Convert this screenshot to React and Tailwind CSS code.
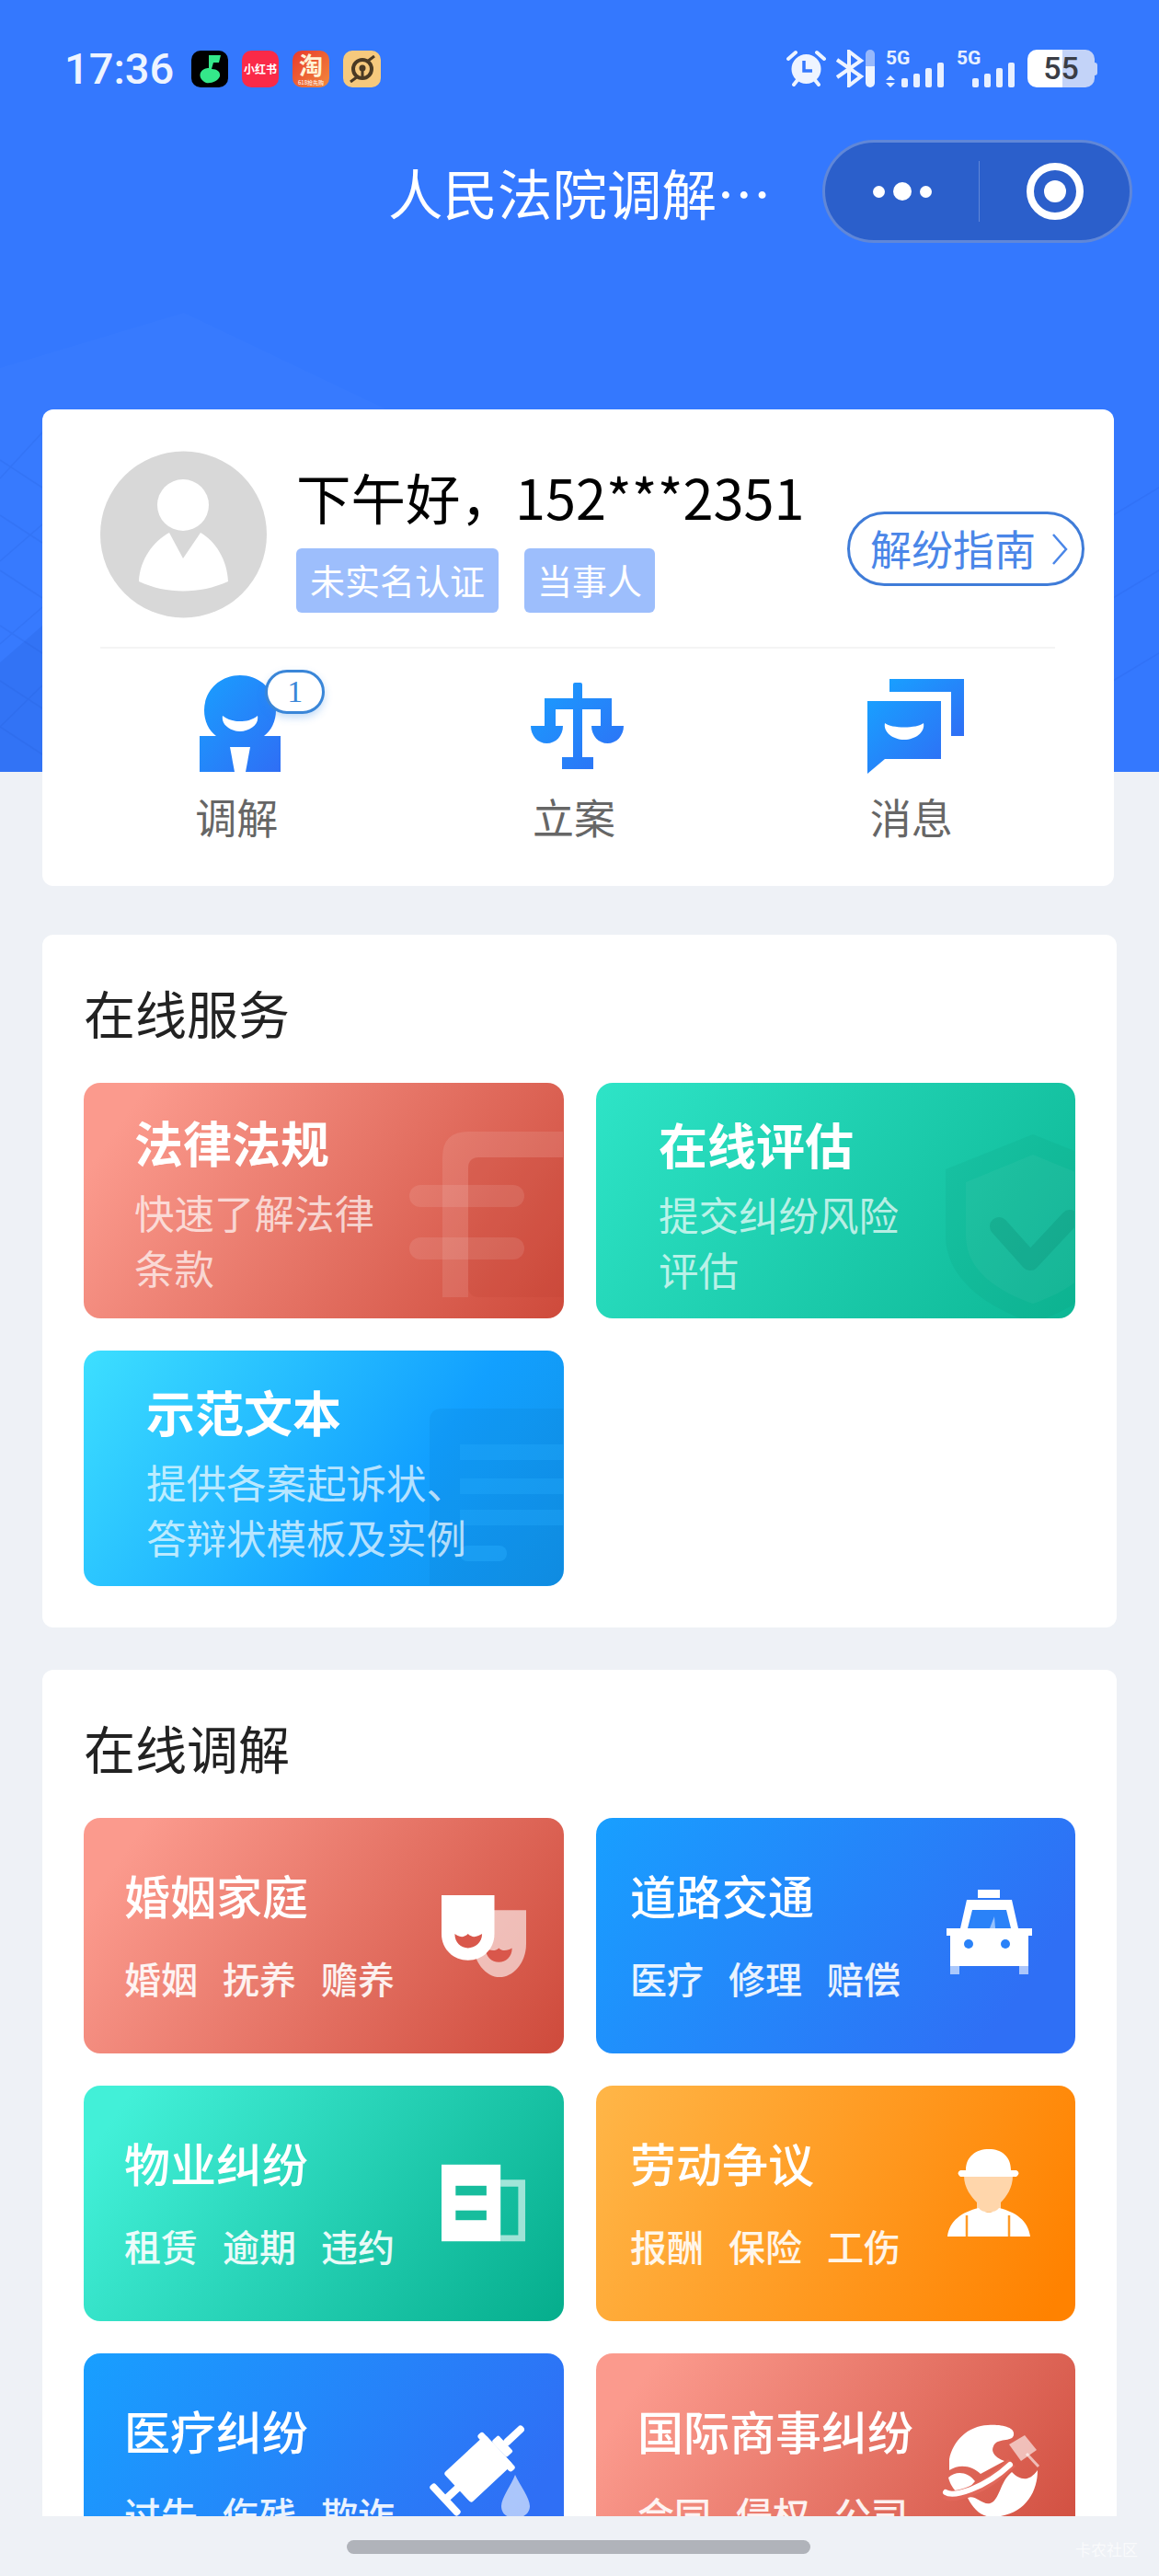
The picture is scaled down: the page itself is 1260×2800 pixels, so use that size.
import React from 'react'

const Grad = ({ id }) => (
    <defs>
        <linearGradient id={id} x1="0" y1="0" x2="1" y2="1">
            <stop offset="0" stopColor="#199fff" />
            <stop offset="1" stopColor="#2f6ef5" />
        </linearGradient>
    </defs>
)

const Backdrop = () => (
    <svg className="absolute left-0 top-0" width="1260" height="839" viewBox="0 0 1260 839" fill="none">
        <path d="M0 400L200 340L420 445L46 840H0Z" fill="#fff" opacity="0.02" />
        <path d="M0 720L46 680V839H0Z" fill="#1e4fc4" opacity="0.15" />
        <g stroke="#1c4fc6" strokeWidth="1.5" opacity="0.13">
            <path d="M0 500L46 530M0 560L46 590M0 620L46 650M0 680L46 710M0 740L46 770M0 790L46 820" />
            <path d="M0 520L46 470M0 610L46 570M0 700L46 660M0 790L46 745" />
            <path d="M1210 560L1260 530M1210 650L1260 620M1210 740L1260 710" />
        </g>
    </svg>
)

const Signal = ({ arrows }) => (
    <div className="relative w-[66px] h-[42px]">
        <span className="absolute left-0 -top-[1px] font-['Roboto'] font-bold text-[21px] leading-[21px] text-[#e8f0ff]">5G</span>
        <svg width="66" height="42" viewBox="0 0 66 42" className="block">
            {arrows && <path d="M0 33L5 28L10 33ZM0 36H10L5 41Z" fill="#e8f0ff" />}
            <g fill="#e8f0ff">
                <rect x="17" y="31" width="7" height="10" rx="2" />
                <rect x="30" y="26" width="7" height="15" rx="2" />
                <rect x="43" y="20" width="7" height="21" rx="2" />
                <rect x="56" y="14" width="7" height="27" rx="2" />
            </g>
        </svg>
    </div>
)

const StatusBar = () => (
    <div className="flex items-center h-[41px] pl-[70px] pr-[67px]">
        <span className="font-['Roboto'] font-medium text-[47px] leading-[41px] text-[#eef4ff] w-[138px]">17:36</span>
        <div className="flex gap-[15px]">
            <div className="w-[40px] h-[40px] rounded-[10px] bg-black flex items-center justify-center">
                <svg width="26" height="32" viewBox="0 0 26 32">
                    <path d="M12 1H25L23 9H17L15 16C21 16 25 19 24 24C22 29 15 32 9 31C5 29 1 25 3 20C5 16 9 15 12 15Z" fill="#34e88a" />
                </svg>
            </div>
            <div className="w-[40px] h-[40px] rounded-[10px] bg-[#fa2a48] flex items-center justify-center">
                <span className="text-white font-bold text-[12px] leading-[16px] whitespace-nowrap">小红书</span>
            </div>
            <div className="w-[40px] h-[40px] rounded-[10px] bg-[linear-gradient(135deg,#e8392c,#f28a3c)] flex flex-col items-center">
                <span className="text-[#fff3d6] font-bold text-[26px] leading-[30px]">淘</span>
                <span className="text-white text-[6px] leading-[9px] whitespace-nowrap">618抢先购</span>
            </div>
            <div className="w-[41px] h-[40px] rounded-[10px] bg-[#f6c97d] flex items-center justify-center">
                <svg width="30" height="30" viewBox="0 0 30 30" fill="none">
                    <circle cx="15" cy="15" r="10" stroke="#4a3a24" strokeWidth="4" />
                    <circle cx="15" cy="14" r="3.5" fill="#4a3a24" />
                    <path d="M28 1L20 7M2 29L10 23M15 17V24" stroke="#4a3a24" strokeWidth="3" />
                </svg>
            </div>
        </div>
        <div className="ml-auto flex items-center">
            <svg width="43" height="41" viewBox="0 0 43 41" fill="none">
                <circle cx="21.5" cy="21" r="16" fill="#eef4ff" />
                <path d="M19 12V23H28" stroke="#3478fe" strokeWidth="3.5" />
                <path d="M2 10L10 3M41 10L33 3M8 38L12 33M35 38L31 33" stroke="#eef4ff" strokeWidth="4" strokeLinecap="round" />
            </svg>
            <svg width="32" height="41" viewBox="0 0 32 41" fill="none" className="ml-[10px]">
                <path d="M2 11L28 29L15 39V2L28 12L2 30" stroke="#eef4ff" strokeWidth="4" />
            </svg>
            <div className="w-[10px] h-[41px] rounded-full bg-[linear-gradient(180deg,#97b8fb_45%,#eef4ff_45%)] ml-[1px]" />
            <div className="ml-[12px]"><Signal arrows /></div>
            <div className="ml-[11px]"><Signal /></div>
            <div className="ml-[11px] flex items-center">
                <div className="w-[73px] h-[41px] rounded-[10px] bg-[linear-gradient(90deg,#ffffff_52%,#c3d3f8_52%)] flex items-center justify-center font-['Roboto'] font-medium text-[34px] leading-[41px] text-[#3a3d45]">55</div>
                <div className="w-[3px] h-[14px] rounded-r bg-[#c3d3f8]" />
            </div>
        </div>
    </div>
)

const NavBar = () => (
    <div className="flex items-center h-[112px] mt-[57px] pl-[422px] pr-[29px]">
        <span className="text-[59.5px] leading-[70px] text-white whitespace-nowrap">人民法院调解…</span>
        <div className="ml-auto w-[337px] h-[112px] rounded-full bg-[#2b5fcb] border-[3px] border-white/25 flex items-center">
            <div className="w-[167px] flex items-center justify-center gap-[9px]">
                <span className="w-[13px] h-[13px] rounded-full bg-white" />
                <span className="w-[20px] h-[20px] rounded-full bg-white" />
                <span className="w-[13px] h-[13px] rounded-full bg-white" />
            </div>
            <div className="w-[1px] h-[66px] bg-white/25" />
            <div className="flex-1 flex items-center justify-center">
                <span className="w-[62px] h-[62px] rounded-full border-[8px] border-white flex items-center justify-center">
                    <span className="w-[24px] h-[24px] rounded-full bg-white" />
                </span>
            </div>
        </div>
    </div>
)

const PersonIcon = () => (
    <svg width="88" height="105" viewBox="0 0 88 105" className="block">
        <Grad id="pg" />
        <path d="M44 0C66 0 83 17 83 38C83 50 78 60 70 66H88V105H0V66H18C10 60 5 50 5 38C5 17 22 0 44 0Z" fill="url(#pg)" />
        <path d="M33 78H55L50 105H38Z" fill="#fff" />
        <path d="M25 44C31 49 38 50 44 50C50 50 57 49 63 44C65 54 54 61 44 61C34 61 23 54 25 44Z" fill="#fff" />
    </svg>
)

const ScalesIcon = () => (
    <svg width="101" height="94" viewBox="0 0 101 94" className="block mt-[8px]">
        <Grad id="sg" />
        <path d="M46 2Q46 0 48 0H54Q56 0 56 2V17H88V47H101C101 58 93 66 83.500 66C74 66 66 58 66 47H76V29H56V81H68V94H34V81H46V29H27V47H35C35 58 27 66 17.500 66C8 66 0 58 0 47H15V17H46Z" fill="url(#sg)" />
    </svg>
)

const MessageIcon = () => (
    <svg width="105" height="103" viewBox="0 0 105 103" className="block mt-[4px]">
        <Grad id="mg" />
        <path d="M24 0H105V62H91V14H24Z" fill="url(#mg)" />
        <path d="M0 24H80V87H19L0 103Z" fill="url(#mg)" />
        <path d="M19 48C26 54 54 54 61 48C63 58 52 66 40 66C28 66 17 58 19 48Z" fill="#fff" />
    </svg>
)

const UserCard = () => (
    <section className="mx-[46px] h-[518px] mt-[181px] w-[1165px] rounded-[12px] bg-white">
        <div className="flex items-start pt-[45px] pl-[63px] pr-[32px]">
            <svg width="181" height="182" viewBox="0 0 181 182" className="shrink-0">
                <circle cx="90.500" cy="91" r="90.500" fill="#d8d8d8" />
                <circle cx="90" cy="59" r="28" fill="#fff" />
                <path d="M75 89L90 117L109 89C125 98 138 118 139 142C108 156 72 156 42 142C43 118 58 98 75 89Z" fill="#fff" />
            </svg>
            <div className="ml-[32px] pt-[14px]">
                <p className="text-[59.500px] leading-[70px] text-black whitespace-nowrap">下午好，152***2351</p>
                <div className="flex gap-[28px] mt-[22px]">
                    <span className="h-[70px] px-[15px] rounded-[6px] bg-[#9dbefc] text-white text-[38px] leading-[68px] whitespace-nowrap">未实名认证</span>
                    <span className="h-[70px] px-[14px] rounded-[6px] bg-[#9dbefc] text-white text-[38px] leading-[68px] whitespace-nowrap">当事人</span>
                </div>
            </div>
            <div className="ml-auto mt-[66px] w-[258px] h-[81px] rounded-full border-[3px] border-[#3f7cd8] flex items-center pl-[22px] gap-[16px] shrink-0">
                <span className="text-[45px] leading-[60px] -mt-[2px] text-[#4a86e8] whitespace-nowrap">解纷指南</span>
                <svg width="20" height="36" viewBox="0 0 20 36" fill="none">
                    <path d="M3 2L17 18L3 34" stroke="#4a86e8" strokeWidth="2.500" />
                </svg>
            </div>
        </div>
        <div className="h-[2px] bg-[#f4f4f4] ml-[63px] mr-[64px] mt-[31px]" />
        <div className="grid grid-cols-3 pl-[28px] pr-[37px] mt-[29px]">
            <div className="flex flex-col items-center">
                <div className="relative h-[105px] ml-[8px]">
                    <PersonIcon />
                    <span className="absolute left-[71px] -top-[6px] w-[65px] h-[48px] rounded-full bg-white border-[3px] border-[#3a86d8] shadow-[0_4px_8px_rgba(60,140,230,0.3)] flex items-center justify-center font-['Liberation_Serif'] text-[34px] leading-[40px] text-[#3a86d8]">1</span>
                </div>
                <span className="mt-[24px] text-[45px] leading-[50px] text-[#666]">调解</span>
            </div>
            <div className="flex flex-col items-center">
                <div className="h-[105px] ml-[8px]"><ScalesIcon /></div>
                <span className="mt-[24px] text-[45px] leading-[50px] text-[#666]">立案</span>
            </div>
            <div className="flex flex-col items-center">
                <div className="h-[105px] ml-[10px]"><MessageIcon /></div>
                <span className="mt-[24px] text-[45px] leading-[50px] text-[#666]">消息</span>
            </div>
        </div>
    </section>
)

const red = 'bg-[linear-gradient(125deg,#fb9a8d_10%,#ce4a3b_100%)]'
const sky = 'bg-[linear-gradient(125deg,#3ddfff_0%,#12a0ff_65%,#1190e6_100%)]'
const teal = 'bg-[linear-gradient(125deg,#2ee4c7_0%,#0db795_100%)]'

const ServiceTile = ({ title, lines, bg, pad, children }) => (
    <div className={`relative overflow-hidden h-[256px] rounded-[18px] ${bg} ${pad}`}>
        {children}
        <h3 className="relative text-[53px] leading-[60px] font-bold text-white whitespace-nowrap">{title}</h3>
        <p className="relative mt-[17px] text-[43.500px] leading-[60px] text-white/70 whitespace-nowrap">
            {lines[0]}<br />{lines[1]}
        </p>
    </div>
)

const LawMark = () => (
    <svg className="absolute left-[354px] top-[53px]" width="167" height="180" viewBox="0 0 167 180">
        <path d="M167 28H76Q64 28 64 40V180H36V28Q36 0 64 0H167Z" fill="#fff" opacity="0.1" />
        <path d="M76 28H167V180H76Q64 180 64 168V40Q64 28 76 28Z" fill="#b8362a" opacity="0.14" />
        <rect x="0" y="58" width="125" height="24" rx="12" fill="#fff" opacity="0.1" />
        <rect x="0" y="115" width="125" height="24" rx="12" fill="#fff" opacity="0.1" />
    </svg>
)

const ShieldMark = () => (
    <svg className="absolute left-[380px] top-[56px]" width="140" height="200" viewBox="0 0 140 200" fill="none">
        <path d="M0 38L95 0L190 38V110C190 160 140 190 95 205C50 190 0 160 0 110Z" fill="#06866f" opacity="0.1" />
        <path d="M22 52L95 22L168 52V110C168 150 130 172 95 184C60 172 22 150 22 110Z" fill="#fff" opacity="0.04" />
        <path d="M58 100L92 138L135 92" stroke="#067a66" strokeWidth="20" strokeLinejoin="round" strokeLinecap="round" opacity="0.2" />
    </svg>
)

const DocMark = () => (
    <svg className="absolute left-[376px] top-[63px]" width="145" height="192" viewBox="0 0 145 192">
        <path d="M0 14Q0 0 14 0H145V192H0Z" fill="#0a6fc0" opacity="0.14" />
        <rect x="33" y="39" width="112" height="17" fill="#27b0ff" opacity="0.3" />
        <rect x="33" y="76" width="112" height="17" fill="#27b0ff" opacity="0.3" />
        <rect x="33" y="110" width="112" height="17" fill="#27b0ff" opacity="0.3" />
        <rect x="33" y="149" width="51" height="17" rx="8" fill="#27b0ff" opacity="0.4" />
    </svg>
)

const MaskIcon = () => (
    <svg width="96" height="93" viewBox="0 0 96 93" className="ml-[8px]">
        <path d="M36 17H96V55C96 78 80 93 66 93C50 93 36 75 36 55Z" fill="#fff" opacity="0.6" />
        <path d="M50 60C54 62 60 65 65 60C70 65 76 62 80 60C80 70 73 76 65 76C57 76 50 70 50 60Z" fill="#d9574b" />
        <path d="M0 0H60V44C60 62 46 74 30 74C14 74 0 62 0 44Z" fill="#fff" />
        <path d="M15 44C18 46 24 50 30 44C36 50 42 46 46 44C46 54 38 60 30 60C22 60 15 54 15 44Z" fill="#d9574b" />
    </svg>
)

const TaxiIcon = () => (
    <svg width="93" height="92" viewBox="0 0 93 92" className="-ml-[6px] -mt-[8px]">
        <rect x="34" y="0" width="24" height="9" fill="#fff" />
        <path d="M22 11H71L78 42H93V50H89V83H4V50H0V42H15Z" fill="#fff" />
        <path d="M28 22H65L70 42H23Z" fill="#2a82f8" />
        <path d="M47 42L52 29L53 42Z" fill="#fff" opacity="0.5" />
        <circle cx="24" cy="59" r="5" fill="#2a82f8" />
        <circle cx="64" cy="59" r="5" fill="#2a82f8" />
        <rect x="4" y="83" width="10" height="9" fill="#fff" opacity="0.6" />
        <rect x="79" y="83" width="10" height="9" fill="#fff" opacity="0.6" />
    </svg>
)

const BuildingIcon = () => (
    <svg width="96" height="88" viewBox="0 0 96 88" className="ml-[8px]">
        <path d="M67 17H95V87H67V80H87V25H67Z" fill="#fff" opacity="0.6" />
        <rect x="0" y="0" width="67" height="87" fill="#fff" />
        <rect x="16" y="24" width="35" height="11" fill="#17bd9d" />
        <rect x="16" y="52" width="35" height="11" fill="#17bd9d" />
    </svg>
)

const WorkerIcon = () => (
    <svg width="90" height="95" viewBox="0 0 90 95" className="-ml-[6px] -mt-[24px]">
        <path d="M18 29H71C71 42 64 52 58 58V68H32V58C26 52 18 42 18 29Z" fill="#ffd6ab" />
        <path d="M20 23C20 8 31 0 45 0C59 0 69 8 69 23H75Q80 26 75 30H14Q9 26 14 23Z" fill="#fff" />
        <path d="M34 64C38 70 52 70 56 64C74 68 88 78 90 95H0C2 78 16 68 34 64Z" fill="#fff" />
        <path d="M21 72V95M67 72V95" stroke="#ff9a26" strokeWidth="2.500" />
    </svg>
)

const SyringeIcon = () => (
    <svg width="108" height="102" viewBox="0 0 108 102" className="overflow-visible">
        <g transform="translate(16 82) rotate(-43)" fill="#fff">
            <rect x="-4" y="-22" width="8" height="44" rx="3" />
            <rect x="0" y="-4" width="22" height="8" />
            <rect x="18" y="-22" width="62" height="44" rx="3" />
            <rect x="72" y="-27" width="8" height="54" rx="3" />
            <rect x="80" y="-12" width="10" height="24" rx="2" />
            <rect x="88" y="-4" width="28" height="8" rx="4" />
        </g>
        <path d="M92 55C97 66 108 80 108 89C108 97 101 102 92 102C83 102 77 97 77 89C77 80 88 66 92 55Z" fill="#fff" opacity="0.6" />
    </svg>
)

const GlobeIcon = () => (
    <svg width="101" height="102" viewBox="0 0 101 102" className="overflow-visible">
        <path d="M4 38C8 18 24 2 46 1C60 0 76 3 74 12C72 20 56 14 52 24C48 32 58 38 64 40L38 54C30 46 16 42 4 50Z" fill="#fff" />
        <path d="M3 58C12 50 24 52 32 62L18 78C10 74 5 66 3 58Z" fill="#fff" />
        <path d="M24 80C34 76 42 92 52 84C60 76 60 62 72 52C80 60 90 64 100 50C100 75 85 100 50 101C38 100 30 92 24 80Z" fill="#fff" />
        <path d="M0 76C8 82 42 72 72 42" fill="none" stroke="#e2685b" strokeWidth="11" />
        <path d="M0 74C8 80 42 70 70 44" fill="none" stroke="#fff" strokeWidth="6" strokeLinecap="round" />
        <path d="M69 22L86 12L99 28L82 40Z" fill="#fff" opacity="0.6" />
        <path d="M88 32L101 46" stroke="#fff" strokeWidth="3" opacity="0.6" />
    </svg>
)

const CaseTile = ({ title, tags, bg, pad, children }) => (
    <div className={`flex items-center justify-between shrink-0 h-[256px] rounded-[18px] ${bg} ${pad} pr-[41px]`}>
        <div>
            <h3 className="text-[50px] leading-[60px] font-medium text-white whitespace-nowrap">{title}</h3>
            <div className="flex gap-[27px] mt-[31px] text-[40px] leading-[60px] font-medium text-white/90 whitespace-nowrap">
                {tags.map(t => <span key={t}>{t}</span>)}
            </div>
        </div>
        <div className="w-[100px] flex justify-center shrink-0">{children}</div>
    </div>
)

const cases = [
    { title: '婚姻家庭', tags: ['婚姻', '抚养', '赡养'], bg: red, pad: 'pl-[44px]', icon: <MaskIcon /> },
    { title: '道路交通', tags: ['医疗', '修理', '赔偿'], bg: 'bg-[linear-gradient(125deg,#189fff_0%,#2f6ff5_85%)]', pad: 'pl-[37px]', icon: <TaxiIcon /> },
    { title: '物业纠纷', tags: ['租赁', '逾期', '违约'], bg: 'bg-[linear-gradient(125deg,#42f0d8_8%,#05ad8c_100%)]', pad: 'pl-[44px]', icon: <BuildingIcon /> },
    { title: '劳动争议', tags: ['报酬', '保险', '工伤'], bg: 'bg-[linear-gradient(115deg,#ffb648_0%,#ff8200_95%)]', pad: 'pl-[37px]', icon: <WorkerIcon /> },
    { title: '医疗纠纷', tags: ['过失', '伤残', '欺诈'], bg: 'bg-[linear-gradient(125deg,#189fff_0%,#2f6ff5_85%)]', pad: 'pl-[44px]', icon: <SyringeIcon /> },
    { title: '国际商事纠纷', tags: ['合同', '侵权', '公司'], bg: red, pad: 'pl-[45px]', icon: <GlobeIcon /> },
]

export default function App() {
    return (
        <div className="relative w-[1260px] h-[2800px] overflow-hidden bg-[#eef1f6] font-['Noto_Sans_CJK_SC','Noto_Sans',sans-serif]">
            <div className="absolute left-0 top-0 w-full h-[839px] bg-[#3478fe]">
                <Backdrop />
            </div>
            <div className="relative h-[2735px] overflow-hidden pt-[54px]">
                <StatusBar />
                <NavBar />
                <UserCard />

                <section className="mt-[53px] ml-[46px] w-[1168px] rounded-[12px] bg-white pt-[54px] pb-[45px] px-[45px]">
                    <h2 className="text-[56px] leading-[60px] text-[#222] mb-[47px]">在线服务</h2>
                    <div className="grid grid-cols-[522px_521px] gap-x-[35px] gap-y-[35px]">
                        <ServiceTile title="法律法规" lines={['快速了解法律', '条款']} bg={red} pad="pl-[55px] pt-[34px]">
                            <LawMark />
                        </ServiceTile>
                        <ServiceTile title="在线评估" lines={['提交纠纷风险', '评估']} bg={teal} pad="pl-[68px] pt-[36px]">
                            <ShieldMark />
                        </ServiceTile>
                        <ServiceTile title="示范文本" lines={['提供各案起诉状、', '答辩状模板及实例']} bg={sky} pad="pl-[68px] pt-[36px]">
                            <DocMark />
                        </ServiceTile>
                    </div>
                </section>

                <section className="mt-[46px] ml-[46px] w-[1168px] rounded-[12px] bg-white pt-[54px] px-[45px] h-[1000px]">
                    <h2 className="text-[56px] leading-[60px] text-[#222] mb-[47px]">在线调解</h2>
                    <div className="grid grid-cols-[522px_521px] gap-x-[35px] gap-y-[35px]">
                        {cases.map(c => (
                            <CaseTile key={c.title} title={c.title} tags={c.tags} bg={c.bg} pad={c.pad}>
                                {c.icon}
                            </CaseTile>
                        ))}
                    </div>
                </section>
            </div>
            <div className="relative h-[65px]">
                <div className="absolute left-[377px] top-[26px] w-[504px] h-[15px] rounded-full bg-[#b0b3ba]" />
                <span className="absolute left-[1169px] top-[26px] text-[17px] leading-[20px] text-white/70 whitespace-nowrap">卡农社区</span>
            </div>
        </div>
    )
}
